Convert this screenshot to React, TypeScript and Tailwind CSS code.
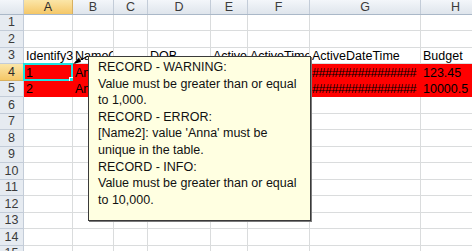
import React from "react";

const cols = [
  { key: "A", w: "w-[49px]" },
  { key: "B", w: "w-[41px]" },
  { key: "C", w: "w-[34px]" },
  { key: "D", w: "w-[63px]" },
  { key: "E", w: "w-[37px]" },
  { key: "F", w: "w-[62px]" },
  { key: "G", w: "w-[111px]" },
  { key: "H", w: "w-[70px]" },
];

const rowHeights = [
  "h-[16px]", "h-[17px]", "h-[16px]", "h-[17px]", "h-[16px]",
  "h-[17px]", "h-[16px]", "h-[17px]", "h-[16px]", "h-[17px]",
  "h-[16px]", "h-[17px]", "h-[16px]", "h-[17px]", "h-[16px]",
];

const data: Record<number, (string | null)[]> = {
  3: ["Identify3", "NameOfN", null, "DOB", "Active", "ActiveTime", "ActiveDateTime", "Budget"],
  4: ["1", "Anna", null, null, null, null, "################", "123.45"],
  5: ["2", "Anna", null, null, null, null, "################", "10000.5"],
};

const notes = [
  "RECORD - WARNING:",
  "Value must be greater than or equal",
  "to 1,000.",
  "RECORD - ERROR:",
  "[Name2]: value 'Anna' must be",
  "unique in the table.",
  "RECORD - INFO:",
  "Value must be greater than or equal",
  "to 10,000.",
];

export default function App() {
  return (
    <div
      className="relative h-[251px] w-[472px] overflow-hidden bg-white text-[12.5px] text-black"
      style={{ fontFamily: '"Liberation Sans", Arial, sans-serif' }}
    >
      {/* column headers */}
      <div className="flex h-[15px] border-b border-[#aab8c8]">
        <div className="w-[24px] shrink-0 border-r border-[#c3ccd8] bg-gradient-to-b from-[#f3f6fa] to-[#dfe5ec]" />
        {cols.map((c) => (
          <div
            key={c.key}
            className={
              c.key === "A"
                ? `${c.w} flex shrink-0 items-center justify-center border-r border-[#d8b060] bg-gradient-to-b from-[#fbe6a8] to-[#f5c766] leading-none text-[#2b2b2b]`
                : `${c.w} flex shrink-0 items-center justify-center border-r border-[#c3ccd8] bg-gradient-to-b from-[#f3f6fa] to-[#dfe5ec] leading-none text-[#3b3b3b]`
            }
          >
            {c.key}
          </div>
        ))}
      </div>

      {rowHeights.map((h, i) => {
        const r = i + 1;
        const vals = data[r] || [];
        const red = r === 4 || r === 5;
        return (
          <div key={r} className={`${h} flex`}>
            <div
              className={
                r === 4
                  ? "flex w-[24px] shrink-0 items-center justify-center border-r border-b border-[#d8b060] bg-gradient-to-b from-[#fbe6a8] to-[#f5c766] leading-none text-[#2b2b2b]"
                  : "flex w-[24px] shrink-0 items-center justify-center border-r border-b border-[#c3ccd8] bg-[#e6ebf1] leading-none text-[#3b3b3b]"
              }
            >
              {r}
            </div>
            {cols.map((c, ci) => (
              <div
                key={c.key}
                className={`${c.w} relative flex shrink-0 items-end whitespace-nowrap ${
                  red ? "border-r border-b border-[#ff0000] bg-[#ff0000]" : "border-r border-b border-[#dadcdd]"
                } ${ci === 0 || (r === 3 && ci !== 3) ? "overflow-visible" : "overflow-hidden"}`}
              >
                {vals[ci] && (
                  <span
                    className={`px-[2px] leading-[14px] ${
                      ci === 6 && red ? "tracking-[-0.45px]" : ""
                    } ${r === 3 && (ci === 1 || ci === 4 || ci === 5) ? "block w-full overflow-hidden" : ""}`}
                  >
                    {vals[ci]}
                  </span>
                )}
                {r === 4 && ci === 0 && (
                  <div className="pointer-events-none absolute -top-[1px] -left-[1px] h-[18px] w-[50px] border-2 border-[#1de3e3]">
                    <div className="absolute -right-[3px] -bottom-[3px] h-[5px] w-[5px] border border-white bg-[#1de3e3]" />
                  </div>
                )}
              </div>
            ))}
          </div>
        );
      })}

      {/* comment connector */}
      <svg className="absolute top-0 left-0" width="472" height="251">
        <line x1="88" y1="56" x2="75" y2="63" stroke="#000" strokeWidth="1" />
        <polygon points="73,64 79,57.5 81,62" fill="#000" />
      </svg>

      {/* comment box */}
      <div className="absolute top-[56px] left-[88px] h-[165px] w-[223px] border border-[#3a3a3a] bg-[#ffffe1] pt-[2px] pl-[9px] text-[12.5px] leading-[16.6px] text-[#111] shadow-[1px_1px_0_#7a7a7a]">
        {notes.map((n, i) => (
          <div key={i} className="whitespace-nowrap">
            {n}
          </div>
        ))}
      </div>
    </div>
  );
}
